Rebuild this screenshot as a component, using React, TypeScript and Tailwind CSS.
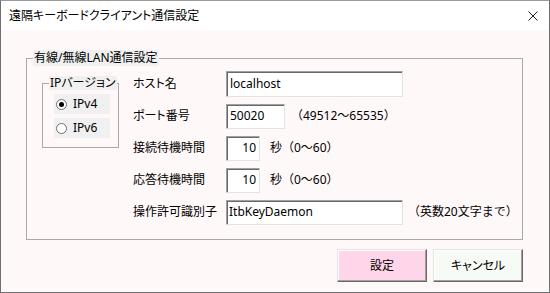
import React from "react";

const font = "font-['Noto_Sans','Noto_Sans_CJK_JP',sans-serif]";
const palt = "[font-feature-settings:'palt']";

const sunken =
    "flex items-center bg-white border border-t-[#a0a0a0] border-l-[#a0a0a0] border-b-[#e3e3e3] border-r-[#e3e3e3] shadow-[inset_1px_1px_0_#696969]";

const raised =
    "flex h-[33px] w-[90px] items-center justify-center border border-t-[#e3e3e3] border-l-[#e3e3e3] border-b-[#696969] border-r-[#696969] shadow-[inset_-1px_-1px_0_#a0a0a0,inset_1px_1px_0_#ffffff]";

function Radio({ label, checked }: { label: string; checked?: boolean }) {
    return (
        <div className="flex h-[20px] w-[56px] items-center bg-[#f0f0f0] pl-[2px]">
            <span className="flex h-[11px] w-[11px] items-center justify-center rounded-full border border-[#707070] bg-white">
                {checked && (
                    <span className="h-[5px] w-[5px] rounded-full bg-black" />
                )}
            </span>
            <span className="ml-[6px] leading-[16px]">{label}</span>
        </div>
    );
}

function Row({ label, children }: { label: string; children: React.ReactNode }) {
    return (
        <div className="flex h-[32px] items-center">
            <div className={`w-[93px] ${palt}`}>{label}</div>
            {children}
        </div>
    );
}

export default function App() {
    return (
        <div
            className={`flex h-[293px] w-[550px] flex-col border border-[#6f6f6f] border-t-[#9a9a9a] text-[12px] text-black ${font}`}
        >
            <div className="flex h-[29px] items-center justify-between bg-white pl-[8px] pr-[11px]">
                <span className={palt}>遠隔キーボードクライアント通信設定</span>
                <svg width="10" height="10" viewBox="0 0 10 10">
                    <path
                        d="M0.5 0.5 L9.5 9.5 M9.5 0.5 L0.5 9.5"
                        stroke="#222"
                        strokeWidth="1"
                        fill="none"
                    />
                </svg>
            </div>
            <div className="flex-1 bg-[#fff8f8] pl-[25px] pt-[20px]">
                <fieldset className="w-[497px] border border-[#a9a9a9] pb-[11px]">
                    <legend className="ml-[6px] bg-[#f0f0f0] px-[1px] leading-[16px]">
                        有線/無線LAN通信設定
                    </legend>
                    <div className="flex items-start pl-[15px] pt-[2px]">
                        <fieldset className="mt-[8px] w-[77px] border border-[#a9a9a9] pb-[9px] pl-[11px]">
                            <legend
                                className={`ml-[-5px] bg-[#f0f0f0] px-[1px] leading-[14px] ${palt}`}
                            >
                                IPバージョン
                            </legend>
                            <div className="flex flex-col gap-[4px] pt-[4px]">
                                <Radio label="IPv4" checked />
                                <Radio label="IPv6" />
                            </div>
                        </fieldset>
                        <div className="ml-[14px] flex flex-col">
                            <Row label="ホスト名">
                                <div className={`${sunken} h-[26px] w-[177px] pl-[3px]`}>
                                    localhost
                                </div>
                            </Row>
                            <Row label="ポート番号">
                                <div className={`${sunken} h-[25px] w-[59px] pl-[3px]`}>
                                    50020
                                </div>
                                <span className="ml-[6px]">（49512～65535）</span>
                            </Row>
                            <Row label="接続待機時間">
                                <div
                                    className={`${sunken} h-[25px] w-[34px] justify-end pr-[3px]`}
                                >
                                    10
                                </div>
                                <span className="ml-[10px]">秒（0～60）</span>
                            </Row>
                            <Row label="応答待機時間">
                                <div
                                    className={`${sunken} h-[25px] w-[34px] justify-end pr-[3px]`}
                                >
                                    10
                                </div>
                                <span className="ml-[10px]">秒（0～60）</span>
                            </Row>
                            <Row label="操作許可識別子">
                                <div className={`${sunken} h-[25px] w-[177px] pl-[2px]`}>
                                    ItbKeyDaemon
                                </div>
                                <span className="ml-[5px]">（英数20文字まで）</span>
                            </Row>
                        </div>
                    </div>
                </fieldset>
                <div className="mt-[9px] flex w-[497px] justify-end gap-[6px]">
                    <button className={`${raised} bg-[#ffd5e9]`}>設定</button>
                    <button className={`${raised} bg-[#f6fbf6] ${palt}`}>
                        キャンセル
                    </button>
                </div>
            </div>
        </div>
    );
}
